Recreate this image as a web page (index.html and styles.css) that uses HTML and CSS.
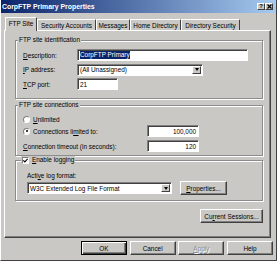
FILE: index.html
```html
<!DOCTYPE html>
<html lang="en">
<head>
<link rel="stylesheet" href="styles.css">
</head>
<body>
  <div class="window">
    <div class="titlebar">
      <span class="title">CorpFTP Primary Properties</span>
      <div class="caption">
        <span class="cbtn">?</span>
        <span class="cbtn">
          <svg width="5" height="5" viewBox="0 0 5 5"><path d="M0.5 0.5L4.5 4.5M4.5 0.5L0.5 4.5" stroke="#000" stroke-width="1.2"/></svg>
        </span>
      </div>
    </div>

    <div class="tabs">
      <div class="tab active t-ftp">FTP Site</div>
      <div class="tab t-sec">Security Accounts</div>
      <div class="tab t-msg">Messages</div>
      <div class="tab t-home">Home Directory</div>
      <div class="tab t-dir">Directory Security</div>
    </div>

    <section class="panel">
      <div class="group g-ident">
        <div class="group-title">FTP site identification</div>
        <div class="row first">
          <label class="lbl"><u>D</u>escription:</label>
          <div class="field f-desc"><span class="sel">CorpFTP Primary</span></div>
        </div>
        <div class="row">
          <label class="lbl"><u>I</u>P address:</label>
          <div class="field combo f-ip">(All Unassigned)<span class="drop"><i></i></span></div>
        </div>
        <div class="row">
          <label class="lbl"><u>T</u>CP port:</label>
          <div class="field f-port">21</div>
        </div>
      </div>

      <div class="group g-conn">
        <div class="group-title">FTP site connections</div>
        <div class="row first">
          <span class="radio"></span><span><u>U</u>nlimited</span>
        </div>
        <div class="row tight">
          <span class="radio on"></span><span class="lbl-wide">Connections li<u>m</u>ited to:</span>
          <div class="field num">100,000</div>
        </div>
        <div class="row">
          <span class="lbl-wide long"><u>C</u>onnection timeout (in seconds):</span>
          <div class="field num">120</div>
        </div>
      </div>

      <div class="group g-log">
        <div class="group-title check-title">
          <span class="check"><svg width="5" height="5" viewBox="0 0 5 5"><path d="M0.3 2.3L1.8 3.8L4.7 0.8" fill="none" stroke="#000" stroke-width="1.2"/></svg></span>
          <span><u>E</u>nable logging</span>
        </div>
        <div class="indent">
          <div class="sub-lbl">Acti<u>v</u>e log format:</div>
          <div class="row log-row">
            <div class="field combo f-log">W3C Extended Log File Format<span class="drop"><i></i></span></div>
            <button class="btn b-props"><u>P</u>roperties...</button>
          </div>
        </div>
      </div>

      <div class="sessions">
        <button class="btn b-sess">Cu<u>r</u>rent Sessions...</button>
      </div>
    </section>

    <div class="buttons">
      <button class="btn default">OK</button>
      <button class="btn">Cancel</button>
      <button class="btn disabled"><u>A</u>pply</button>
      <button class="btn">Help</button>
    </div>
  </div>
</body>
</html>
```

FILE: styles.css
```css
* {
    margin: 0;
    padding: 0;
    box-sizing: border-box;
}
body
{
    background: #c9c8c4;
    font-family: "Liberation Sans", Arial, sans-serif;
    font-size: 6.4px;
    color: #000;
}
u
{
    text-decoration: underline;
    text-underline-offset: 1px;
}
.window
{
    width: 277px;
    height: 261px;
    background: #c9c8c4;
    border-left: 1px solid #fff;
    border-right: 1px solid #404040;
    border-bottom: 1px solid #404040;
    display: flex;
    flex-direction: column;
}
.titlebar
{
    height: 13px;
    background: linear-gradient(to right, #0a246a, #a6caf0);
    display: flex;
    align-items: center;
    justify-content: space-between;
    padding: 0 3px 0 1px;
}
.title
{
    color: #fff;
    font-weight: bold;
    font-size: 6.9px;
}
.caption
{
    display: flex;
}
.cbtn
{
    width: 8px;
    height: 7px;
    background: #c9c8c4;
    border: 1px solid;
    border-color: #fff #404040 #404040 #fff;
    display: flex;
    align-items: center;
    justify-content: center;
    font-weight: bold;
    font-size: 6px;
    line-height: 5px;
}

/* tabs */
.tabs
{
    display: flex;
    align-items: flex-end;
    height: 13px;
    margin-top: 4px;
    padding-left: 4px;
    position: relative;
    z-index: 1;
}
.tab
{
    height: 11px;
    border: 1px solid;
    border-color: #fff #404040 transparent #fff;
    border-bottom: none;
    border-radius: 1px 1px 0 0;
    display: flex;
    align-items: center;
    justify-content: center;
    white-space: nowrap;
}
.tab.active
{
    height: 14px;
    margin-bottom: -1px;
    background: #c9c8c4;
    padding-bottom: 2px;
}
.t-ftp { width: 32px; }
.t-sec { width: 59px; }
.t-msg { width: 34px; }
.t-home { width: 51px; }
.t-dir { width: 59px; }

/* panel */
.panel
{
    margin: 0 5px 0 3px;
    height: 208px;
    border: 1px solid;
    border-color: #fff #404040 #404040 #fff;
    box-shadow: inset -1px -1px 0 #808080;
    padding: 9px 7px 0 10px;
    display: flex;
    flex-direction: column;
}
.group
{
    border: 1px solid #8c8c8c;
    box-shadow: 1px 1px 0 #fff, inset 1px 1px 0 #fff;
    padding: 0 6px 8px 7px;
}
.group-title
{
    width: fit-content;
    height: 8px;
    line-height: 8px;
    margin: -5px 0 0 -5px;
    padding: 0 1px;
    background: #c9c8c4;
}
.g-conn
{
    margin-top: 6px;
    padding-bottom: 3px;
}
.g-log
{
    margin-top: 4px;
    padding-bottom: 5px;
}
.row
{
    display: flex;
    align-items: center;
    height: 12px;
    margin-top: 2.5px;
}
.row.first
{
    margin-top: 5px;
}
.g-conn .row.first
{
    margin-top: 4px;
}
.row.tight
{
    margin-top: 0;
}
.g-conn .row
{
    margin-top: 3px;
}
.g-conn .row.tight
{
    margin-top: 0;
}
.lbl
{
    width: 54px;
}
.lbl-wide
{
    width: 114px;
}
.lbl-wide.long
{
    width: 124px;
}

/* edit boxes */
.field
{
    height: 12px;
    background: #fff;
    border: 1px solid;
    border-color: #808080 #fff #fff #808080;
    box-shadow: inset 1px 1px 0 #404040;
    padding: 0 2px;
    display: flex;
    align-items: center;
    position: relative;
    white-space: nowrap;
}
.f-desc { width: 171px; }
.f-ip { width: 126px; }
.f-port { width: 41px; }
.num
{
    width: 52px;
    justify-content: flex-end;
}
.sel
{
    background: #0a246a;
    color: #fff;
    line-height: 8px;
}
.combo
{
    padding-right: 12px;
}
.drop
{
    position: absolute;
    right: 1px;
    top: 1px;
    bottom: 1px;
    width: 9px;
    background: #c9c8c4;
    border: 1px solid;
    border-color: #fff #404040 #404040 #fff;
    display: flex;
    align-items: center;
    justify-content: center;
}
.drop i
{
    border-left: 2.5px solid transparent;
    border-right: 2.5px solid transparent;
    border-top: 3px solid #000;
}

/* radios and checkbox */
.radio
{
    width: 7px;
    height: 7px;
    border-radius: 50%;
    border: 1px solid;
    border-color: #808080 #fff #fff #808080;
    background: #fff;
    margin-right: 3px;
    display: flex;
    align-items: center;
    justify-content: center;
}
.radio.on::after
{
    content: "";
    width: 2px;
    height: 2px;
    border-radius: 50%;
    background: #000;
}
.check-title
{
    display: flex;
    align-items: center;
    margin-left: -2px;
}
.check
{
    width: 7px;
    height: 7px;
    background: #fff;
    border: 1px solid;
    border-color: #808080 #fff #fff #808080;
    display: flex;
    align-items: center;
    justify-content: center;
    margin-right: 3px;
}
.indent
{
    padding-left: 4px;
}
.sub-lbl
{
    height: 8px;
    line-height: 8px;
    margin-top: 8px;
}
.log-row
{
    height: 14px;
    margin-top: 1px;
    gap: 8px;
}
.f-log { width: 145px; }

/* push buttons */
.btn
{
    font-family: inherit;
    font-size: inherit;
    color: #000;
    background: #c9c8c4;
    height: 14px;
    border: 1px solid;
    border-color: #fff #404040 #404040 #fff;
    box-shadow: inset -1px -1px 0 #808080;
    white-space: nowrap;
}
.b-props { width: 47px; }
.sessions
{
    display: flex;
    justify-content: flex-end;
    margin-top: 8px;
}
.b-sess { width: 63px; }
.buttons
{
    display: flex;
    justify-content: flex-end;
    gap: 2.7px;
    margin-top: 3px;
    padding-right: 3px;
}
.buttons .btn
{
    width: 46px;
}
.btn.default
{
    border-color: #000;
    box-shadow: inset 1px 1px 0 #fff, inset -1px -1px 0 #404040, inset -2px -2px 0 #808080;
}
.btn.disabled
{
    color: #8c8c8c;
    text-shadow: 1px 1px 0 #fff;
}
```
